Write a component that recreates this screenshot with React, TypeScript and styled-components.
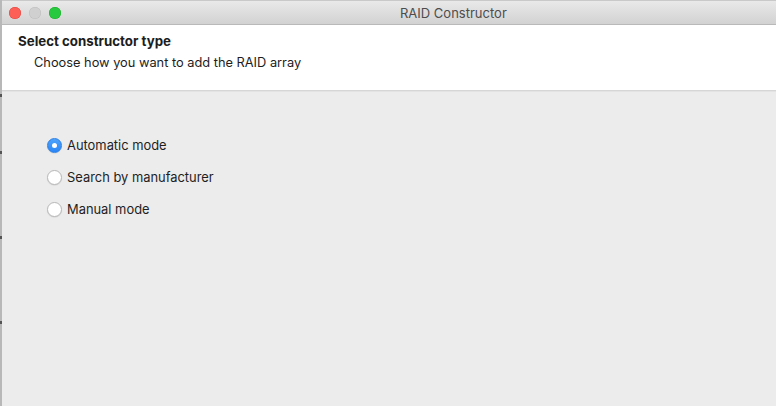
import { FC } from "react"
import styled, { createGlobalStyle } from "styled-components"

const GlobalStyle = createGlobalStyle`
  html, body {
    margin: 0;
    padding: 0;
    background: #ececec;
  }
  body {
    font-family: Inter, "Liberation Sans", Arial, sans-serif;
    font-size: 13px;
    color: #1d1d1d;
  }
`

const options = [
  { label: "Automatic mode", checked: true },
  { label: "Search by manufacturer", checked: false },
  { label: "Manual mode", checked: false },
]

const App: FC = () => (
  <>
    <GlobalStyle />
    <StyledScreen>
      <StyledDesktopEdge />
      <StyledWindow>
        <StyledTitleBar>
          <StyledTrafficLights>
            <StyledLight color="#fd5f57" border="#e0443e" />
            <StyledLight color="#d0d0d0" border="#bdbdbd" />
            <StyledLight color="#27c93f" border="#1aab29" />
          </StyledTrafficLights>
          <StyledTitle>RAID Constructor</StyledTitle>
        </StyledTitleBar>
        <StyledHeader>
          <StyledHeading>Select constructor type</StyledHeading>
          <StyledSubheading>Choose how you want to add the RAID array</StyledSubheading>
        </StyledHeader>
        <StyledBody>
          <StyledOptions>
            {options.map((o) => (
              <StyledOption key={o.label}>
                <StyledRadio checked={o.checked} />
                <span>{o.label}</span>
              </StyledOption>
            ))}
          </StyledOptions>
        </StyledBody>
      </StyledWindow>
    </StyledScreen>
  </>
)

export default App

const StyledScreen = styled.div`
  display: flex;
  width: 776px;
  height: 406px;
  overflow: hidden;
`

const StyledDesktopEdge = styled.div`
  width: 2px;
  flex-shrink: 0;
  background: linear-gradient(
    to bottom,
    #b8b8b8 0 94px,
    #555 94px 97px,
    #b8b8b8 97px 151px,
    #555 151px 154px,
    #b8b8b8 154px 236px,
    #555 236px 239px,
    #b8b8b8 239px 321px,
    #555 321px 324px,
    #b8b8b8 324px
  );
`

const StyledWindow = styled.div`
  flex: 1;
  display: flex;
  flex-direction: column;
  background: #ececec;
`

const StyledTitleBar = styled.div`
  display: flex;
  align-items: center;
  background: linear-gradient(to bottom, #e9e9e9, #d2d2d2);
  border-top: 1px solid #c9c9c9;
  border-bottom: 1px solid #b9b9b9;
  box-sizing: border-box;
  height: 25px;
`

const StyledTrafficLights = styled.div`
  display: flex;
  gap: 8px;
  padding-left: 7px;
`

const StyledLight = styled.span<{ color: string; border: string }>`
  width: 12px;
  height: 12px;
  border-radius: 50%;
  background: ${(p) => p.color};
  box-shadow: inset 0 0 0 0.5px ${(p) => p.border};
`

const StyledTitle = styled.div`
  margin-left: 339px;
  color: #4d4d4d;
  font-size: 13px;
`

const StyledHeader = styled.div`
  background: #fff;
  height: 66px;
  border-bottom: 1px solid #d6d6d6;
  box-sizing: border-box;
  padding: 8px 0 0 16px;
`

const StyledHeading = styled.div`
  font-weight: 700;
  font-size: 13.3px;
  line-height: 16px;
`

const StyledSubheading = styled.div`
  margin: 6px 0 0 16px;
  font-size: 12.8px;
  line-height: 16px;
`

const StyledBody = styled.div`
  flex: 1;
  background: #ececec;
  padding: 45px 0 0 45px;
  border-top: 1px solid #e3e3e3;
`

const StyledOptions = styled.div`
  display: flex;
  flex-direction: column;
  gap: 16px;
`

const StyledOption = styled.label`
  display: flex;
  align-items: center;
  gap: 5px;
  height: 16px;
  font-size: 12.9px;
  color: #1f1f1f;
`

const StyledRadio = styled.span<{ checked: boolean }>`
  width: 15px;
  height: 15px;
  border-radius: 50%;
  box-sizing: border-box;
  display: flex;
  align-items: center;
  justify-content: center;
  background: ${(p) => (p.checked ? "linear-gradient(#4ea3fb, #2b86f6)" : "#fff")};
  border: 1px solid ${(p) => (p.checked ? "#2b7fe6" : "#b9b9b9")};
  box-shadow: 0 0.5px 1px rgba(0, 0, 0, 0.12);

  &::after {
    content: "";
    display: ${(p) => (p.checked ? "block" : "none")};
    width: 5px;
    height: 5px;
    border-radius: 50%;
    background: #fff;
  }
`
